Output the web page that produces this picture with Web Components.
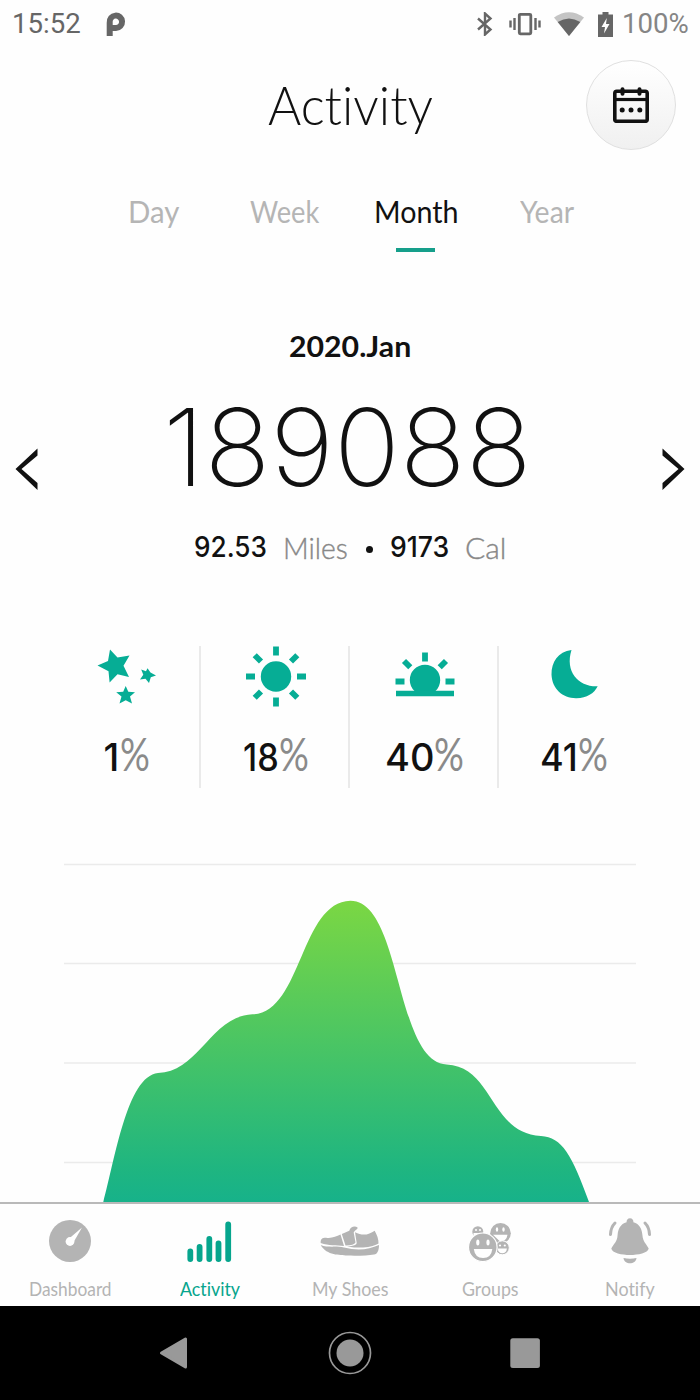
<!DOCTYPE html>
<html lang="en">
<head>
<meta charset="utf-8">
<meta name="viewport" content="width=device-width, initial-scale=1">
<title>Activity</title>
<style>
  body {
    margin: 0;
    background: #fefefe;
    font-family: Lato, "Open Sans", sans-serif;
    font-variant-ligatures: none;
    color: #111;
  }
</style>
</head>
<body>
<activity-app></activity-app>

<script>
const icons = {
  bluetooth: { box: '0 0 18 24', body: '<path d="M2 6.500L14.500 17.500L9 22.500V1.500L14.500 6.500L2 17.500" fill="none" stroke="currentColor" stroke-width="2.400"/>' },
  vibrate: { box: '0 0 32 24', body: '<rect x="10.300" y="2.300" width="11.500" height="19.500" rx="1" fill="none" stroke="currentColor" stroke-width="2.800"/><path d="M1.500 8.500v7M5.500 6v12M26.500 6v12M30.500 8.500v7" stroke="currentColor" stroke-width="2.400"/>' },
  wifi: { box: '0 0 30 24', body: '<path d="M0 5.500Q15-5 30 5.500L15 24Z" fill="#c4c4c4"/><path d="M3.700 10Q15 3 26.300 10L15 24Z" fill="currentColor"/>' },
  battery: { box: '0 0 15 25', body: '<path d="M4.500 0h6v2.500H15V25H0V2.500h4.500Z" fill="currentColor"/><path d="M8.800 6L3.500 15h3.500l-1 6.500L11.500 12H8Z" fill="#fff"/>' },
  calendar: { box: '0 0 36 36', body: '<rect x="1.800" y="4.300" width="32.400" height="30" rx="2" fill="none" stroke="currentColor" stroke-width="3.600"/><path d="M2 12.500h32" stroke="currentColor" stroke-width="3.200"/><path d="M9.500 2.200v4.500M26.500 2.200v4.500" stroke="currentColor" stroke-width="4" stroke-linecap="round"/><g fill="currentColor"><circle cx="9.200" cy="23" r="2.500"/><circle cx="18" cy="23" r="2.500"/><circle cx="26.800" cy="23" r="2.500"/></g>' },
  prev: { box: '0 0 24 42', body: '<path d="M22.500 .500V7.500L6.500 21L22.500 35V42L.500 21Z" fill="currentColor"/>' },
  next: { box: '0 0 24 42', body: '<path d="M1.500 .500V7.500L17.500 21L1.500 35V42L23.500 21Z" fill="currentColor"/>' },
  stars: { box: '0 0 62 62', body: '<g fill="currentColor"><path d="M14 4.500L21.500 12.500L33.500 10.500L27.500 20.800L33 32L21.500 29.300L13.600 37.500L12.500 26.200L1.500 20.500L12 16Z"/><path d="M51.500 23.200L54.500 27.500L60 30.500L54.800 32.200L53 38L49.500 33.700L44 34.500L47.300 29.800L45.200 24.500L50 26.200Z"/><path d="M29.700 41L32.300 46.800L39 47.300L34 51.500L36 58.500L29.700 55.200L23.500 58.500L25.500 51.500L20.200 47.300L27.200 46.800Z"/></g>' },
  sun: { box: '0 0 62 62', body: '<circle cx="31" cy="31.500" r="15.200" fill="currentColor"/><g stroke="currentColor" stroke-width="5.800"><path d="M31 1.500v9M31 52.500v9M1 31.500h9M52 31.500h9"/><path d="M9.700 10.200l6.300 6.300M46 46.500l6.300 6.300M52.300 10.200L46 16.500M16 46.500l-6.300 6.300"/></g>' },
  sunset: { box: '0 0 62 62', body: '<path d="M20.500 46A15.200 15.200 0 1 1 41.500 46Z" fill="currentColor"/><path d="M2 48.500h58" stroke="currentColor" stroke-width="5.500"/><path d="M31 7.500v9M1.500 36.500h9M51.500 36.500h9M10 16l6.300 6.300M52 16l-6.300 6.300" stroke="currentColor" stroke-width="5.800"/>' },
  moon: { box: '0 0 62 62', body: '<path d="M28.500 4.900C15 6.500 8.300 17 8.500 29.500C9 44 20 53.500 33.500 53.200C44 52.800 51 48.500 54.700 41.200C36 42 21.500 27 28.500 4.900Z" fill="currentColor"/>' },
  dashboard: { box: '0 0 60 48', body: '<circle cx="30" cy="24" r="21" fill="currentColor"/><circle cx="30" cy="24.500" r="4.400" fill="#fff"/><path d="M42 10.500L32.800 26.500L28 22.500Z" fill="#fff"/>' },
  activity: { box: '0 0 60 48', body: '<path d="M10.300 34.500v7.500M19.600 30v12M29.300 22v20M38.500 26.500v15.500M48.200 7.500v34.500" stroke="currentColor" stroke-width="5.800" stroke-linecap="round"/>' },
  shoes: { box: '0 0 60 48', body: `
    <g fill="currentColor">
      <path d="M.700 26C.500 22 2 20.700 6 20.700C12 21.500 16 19.500 20.500 17.500L24 29C16 28 9 29 .700 26Z"/>
      <path d="M21.800 17L29.300 13.700C30.500 9.500 35 8.700 37.500 10.500C38.500 12 34.500 13 33.700 15.500L35.500 25.500Q34 28.500 25.500 28.500Z"/>
      <path d="M35 15.200C43 19.500 49 17.500 54.700 13.700C57 18 58.700 22 58.500 26.500C51 30.500 43 31.500 27 29.700Q37 28.500 36.700 26Z"/>
      <path d="M.700 28C8 31 16 28.500 24 30.500C38 34 49 32.500 59 28C59 33 57.500 37.300 54 37.500C48 38.500 38 39 27 38.600C20 37.500 7 39 .700 28Z"/>
    </g>` },
  groups: { box: '0 0 60 48', body: `
    <circle cx="17.800" cy="14.700" r="5.500" fill="currentColor"/><circle cx="16" cy="13" r="1" fill="#fff"/><circle cx="20" cy="13" r="1" fill="#fff"/><path d="M13.500 16h8.500v4h-8.500Z" fill="#fff"/>
    <circle cx="40.500" cy="16.300" r="10.300" fill="currentColor"/><ellipse cx="37" cy="12.500" rx="1.200" ry="2.200" fill="#fff"/><ellipse cx="43.500" cy="12.500" rx="1.200" ry="2.200" fill="#fff"/><path d="M33 17.800H47.500Q46.500 24.500 40 24.500Z" fill="#fff"/>
    <circle cx="42.300" cy="30.800" r="7" fill="currentColor" stroke="#fff"/><circle cx="40" cy="28.500" r="1.100" fill="#fff"/><circle cx="44.800" cy="28.500" r="1.100" fill="#fff"/><path d="M37.700 31.500h9.200q-.500 4.700-4.600 4.700t-4.600-4.700Z" fill="#fff"/>
    <circle cx="22.800" cy="30.300" r="14.300" fill="currentColor" stroke="#fff" stroke-width="1.200"/><ellipse cx="17.800" cy="25.500" rx="1.600" ry="3" fill="#fff"/><ellipse cx="28" cy="25.500" rx="1.600" ry="3" fill="#fff"/><path d="M13.800 32h18.500q-1 9-9.200 9T13.800 32Z" fill="#fff"/>` },
  notify: { box: '0 0 60 48', body: '<path d="M30 1.200C27.800 1.200 26.300 3 26.600 5.300C20.500 7 18 12 17.600 18C17.200 25 13.500 27 11.300 31.500C12 36 22 38 30 38S48 36 48.700 31.500C46.500 27 43 25 42.400 18C42 12 39.500 7 33.400 5.300C33.700 3 32.200 1.200 30 1.200ZM23.500 41C28 42 32 42 36.500 41C36 48 24 48 23.500 41Z" fill="currentColor"/><path d="M15 6C12 9 10.700 12.500 10.500 17.500M45 6C48 9 49.300 12.500 49.500 17.500" stroke="currentColor" stroke-width="3" stroke-linecap="round" fill="none"/>' },
  back: { box: '0 0 44 44', body: '<path d="M8.500 22L32.500 8V36Z" fill="currentColor" stroke="currentColor" stroke-width="3" stroke-linejoin="round"/>' },
  home: { box: '0 0 44 44', body: '<circle cx="22" cy="22" r="13.500" fill="currentColor"/><circle cx="22" cy="22" r="20.500" fill="none" stroke="currentColor" stroke-width="1.700"/>' },
  recent: { box: '0 0 44 44', body: '<rect x="7.300" y="7.300" width="29.600" height="29.600" rx="2.500" fill="currentColor"/>' }
};

class AppIcon extends HTMLElement {
  constructor() {
    super();
    this.attachShadow({ mode: 'open' });
  }

  connectedCallback() {
    const icon = icons[this.getAttribute('name')];
    const [, , w, h] = icon.box.split(' ');
    this.shadowRoot.innerHTML = `
      <style>
        :host { display: block; width: ${w}px; height: ${h}px; flex: none; }
        svg { display: block; }
      </style>
      <svg width="${w}" height="${h}" viewBox="${icon.box}">${icon.body}</svg>
    `;
  }
}

// One line of text squeezed or stretched to a given width
class FitText extends HTMLElement {
  constructor() {
    super();
    this.attachShadow({ mode: 'open' });
  }

  connectedCallback() {
    const width = Number(this.getAttribute('width'));
    this.shadowRoot.innerHTML = `
      <style>
        :host { display: block; width: ${width}px; white-space: nowrap; flex: none; }
        span { display: inline-block; transform-origin: 0 50%; }
      </style>
      <span><slot></slot></span>
    `;
    const span = this.shadowRoot.querySelector('span');
    span.style.transform = `scaleX(${width / span.offsetWidth})`;
  }
}

class StatusBar extends HTMLElement {
  constructor() {
    super();
    this.attachShadow({ mode: 'open' });
    this.shadowRoot.innerHTML = `
      <style>
        :host {
          display: flex;
          align-items: center;
          height: 48px;
          padding: 0 11px 0 12px;
          box-sizing: border-box;
          font: 28px/48px Roboto, sans-serif;
          color: #666;
        }
        .app { margin-left: 25px; }
        .right { margin-left: auto; display: flex; align-items: center; }
        .pct { color: #858585; margin-left: 9px; }
      </style>
      <fit-text width="69">15:52</fit-text>
      <svg class="app" width="20" height="24" viewBox="0 0 20 24">
        <path d="M3.700 24V10.500A6.200 6.200 0 1 1 10 16H4" fill="none" stroke="currentColor" stroke-width="6"/>
      </svg>
      <div class="right">
        <app-icon name="bluetooth"></app-icon>
        <app-icon name="vibrate" style="margin-left:15px"></app-icon>
        <app-icon name="wifi" style="margin-left:13px"></app-icon>
        <app-icon name="battery" style="margin-left:14px"></app-icon>
        <fit-text class="pct" width="67">100%</fit-text>
      </div>
    `;
  }
}

class ActivityHeader extends HTMLElement {
  constructor() {
    super();
    this.attachShadow({ mode: 'open' });
    this.shadowRoot.innerHTML = `
      <style>
        :host {
          display: grid;
          grid-template-columns: 1fr auto 1fr;
          align-items: center;
          height: 112px;
          padding: 0 24px;
        }
        .title { grid-column: 2; font-size: 53px; font-weight: 300; line-height: 110px; padding-top: 2px; }
        .button {
          justify-self: end;
          display: flex;
          align-items: center;
          justify-content: center;
          width: 90px;
          height: 90px;
          margin-top: 1px;
          box-sizing: border-box;
          border: 1.5px solid #e0e0e0;
          border-radius: 50%;
          background: linear-gradient(#fff, #f0f0f0);
        }
      </style>
      <fit-text class="title" width="165"><slot></slot></fit-text>
      <div class="button"><app-icon name="calendar"></app-icon></div>
    `;
  }
}

class PeriodTab extends HTMLElement {
  constructor() {
    super();
    this.attachShadow({ mode: 'open' });
  }

  connectedCallback() {
    this.shadowRoot.innerHTML = `
      <style>
        :host {
          display: flex;
          flex-direction: column;
          align-items: center;
          width: 131px;
          color: #b5b5b5;
          font-size: 30px;
          line-height: 40px;
        }
        :host([active]) { color: #111; }
        i { width: 39px; height: 4px; margin-top: 17px; }
        :host([active]) i { background: #169f8b; }
      </style>
      <fit-text width="${this.getAttribute('text-width')}"><slot></slot></fit-text>
      <i></i>
    `;
  }
}

class MonthSummary extends HTMLElement {
  constructor() {
    super();
    this.attachShadow({ mode: 'open' });
    this.shadowRoot.innerHTML = `
      <style>
        :host {
          display: flex;
          justify-content: space-between;
          height: 251px;
          padding: 0 15px;
        }
        .arrow { margin-top: 122px; }
        .middle { display: flex; flex-direction: column; align-items: center; }
        .date { font-size: 29px; font-weight: 700; line-height: 40px; }
        .steps {
          font: 200 107px/130px Inter, sans-serif;
          margin: 16px 5px 0 0;
        }
        .totals {
          display: flex;
          align-items: center;
          margin-top: 14px;
          font-size: 30px;
          line-height: 40px;
        }
        .num { font: 500 28px/40px Inter, sans-serif; padding-top: 1px; }
        .unit { color: #888; font-weight: 300; margin-left: 16px; -webkit-text-stroke: .4px #888; }
        .dot { width: 7px; height: 7px; border-radius: 50%; background: #111; margin: 5px 17px 0 18px; }
      </style>
      <app-icon class="arrow" name="prev"></app-icon>
      <div class="middle">
        <fit-text class="date" width="122">2020.Jan</fit-text>
        <fit-text class="steps" width="369">189088</fit-text>
        <div class="totals">
          <fit-text class="num" width="73">92.53</fit-text>
          <fit-text class="unit" width="65">Miles</fit-text>
          <span class="dot"></span>
          <fit-text class="num" width="59">9173</fit-text>
          <fit-text class="unit" width="41">Cal</fit-text>
        </div>
      </div>
      <app-icon class="arrow" name="next"></app-icon>
    `;
  }
}

class DayPart extends HTMLElement {
  constructor() {
    super();
    this.attachShadow({ mode: 'open' });
  }

  connectedCallback() {
    this.shadowRoot.innerHTML = `
      <style>
        :host {
          display: flex;
          flex-direction: column;
          align-items: center;
          width: 149px;
          height: 142px;
          box-sizing: border-box;
          padding-left: 2px;
          border-right: 2px solid #eaeaea;
        }
        :host(:last-of-type) { border-color: transparent; }
        app-icon { color: #06ad95; margin-top: -1px; }
        .value { display: flex; margin-top: 26px; font: 500 38px/48px Inter, sans-serif; }
        .sign { font: 400 46px/42px Lato, sans-serif; color: #8a8a8a; }
      </style>
      <app-icon name="${this.getAttribute('icon')}"></app-icon>
      <div class="value">
        <fit-text width="${this.getAttribute('text-width')}"><slot></slot></fit-text>
        <fit-text class="sign" width="30">%</fit-text>
      </div>
    `;
  }
}

class StepChart extends HTMLElement {
  constructor() {
    super();
    this.attachShadow({ mode: 'open' });
    this.shadowRoot.innerHTML = `
      <style>
        :host { display: block; height: 352px; }
        svg { display: block; }
      </style>
      <svg width="700" height="352" viewBox="0 850 700 352">
        <defs>
          <linearGradient id="fill" gradientUnits="userSpaceOnUse" x1="0" y1="900" x2="0" y2="1202">
            <stop offset="0" stop-color="#7bd743"/>
            <stop offset=".9" stop-color="#1eb581"/>
            <stop offset="1" stop-color="#17b28a"/>
          </linearGradient>
        </defs>
        <path d="M64 864.500H636M64 963.500H636M64 1063H636M64 1162.500H636" stroke="#ebebeb" stroke-width="1.600"/>
        <path fill="url(#fill)" d="M103.300 1202C115 1160 127 1076 158 1073C199 1072 211 1016 252.400 1014.300C302 1013 300 902 350.400 900.700C402 901 395 1062 446.600 1064.500C494 1067 490 1134 541 1136C562 1137 572 1155 589 1202Z"/>
      </svg>
    `;
  }
}

class NavItem extends HTMLElement {
  constructor() {
    super();
    this.attachShadow({ mode: 'open' });
  }

  connectedCallback() {
    this.shadowRoot.innerHTML = `
      <style>
        :host {
          display: flex;
          flex-direction: column;
          align-items: center;
          width: 140px;
          padding-top: 13px;
          color: #b4b4b4;
          font-size: 19px;
          line-height: 26px;
        }
        :host([active]) { color: #06a58d; }
        fit-text { margin-top: 11px; }
      </style>
      <app-icon name="${this.getAttribute('icon')}"></app-icon>
      <fit-text width="${this.getAttribute('text-width')}"><slot></slot></fit-text>
    `;
  }
}

class SystemBar extends HTMLElement {
  constructor() {
    super();
    this.attachShadow({ mode: 'open' });
    this.shadowRoot.innerHTML = `
      <style>
        :host {
          display: flex;
          justify-content: center;
          gap: 131px;
          height: 94px;
          padding-top: 25px;
          box-sizing: border-box;
          background: #000;
          color: #999;
        }
      </style>
      <app-icon name="back"></app-icon>
      <app-icon name="home"></app-icon>
      <app-icon name="recent"></app-icon>
    `;
  }
}

class ActivityApp extends HTMLElement {
  constructor() {
    super();
    this.attachShadow({ mode: 'open' });
    this.shadowRoot.innerHTML = `
      <style>
        :host { display: flex; flex-direction: column; width: 700px; height: 1400px; overflow: hidden; }
        .tabs { display: flex; justify-content: center; height: 133px; padding-top: 31px; box-sizing: border-box; }
        month-summary { margin-top: 33px; }
        .parts { display: flex; justify-content: center; margin-top: 69px; }
        step-chart { margin-top: 62px; }
        .nav {
          display: flex;
          height: 104px;
          box-sizing: border-box;
          border-top: 2px solid #b9b9b9;
          background: #fefefe;
        }
      </style>
      <status-bar></status-bar>
      <activity-header>Activity</activity-header>
      <div class="tabs">
        <period-tab text-width="51">Day</period-tab>
        <period-tab text-width="69">Week</period-tab>
        <period-tab text-width="84" active>Month</period-tab>
        <period-tab text-width="54">Year</period-tab>
      </div>
      <month-summary></month-summary>
      <div class="parts">
        <day-part icon="stars" text-width="16">1</day-part>
        <day-part icon="sun" text-width="36">18</day-part>
        <day-part icon="sunset" text-width="49">40</day-part>
        <day-part icon="moon" text-width="38">41</day-part>
      </div>
      <step-chart></step-chart>
      <div class="nav">
        <nav-item icon="dashboard" text-width="83">Dashboard</nav-item>
        <nav-item icon="activity" text-width="60" active>Activity</nav-item>
        <nav-item icon="shoes" text-width="76">My Shoes</nav-item>
        <nav-item icon="groups" text-width="57">Groups</nav-item>
        <nav-item icon="notify" text-width="50">Notify</nav-item>
      </div>
      <system-bar></system-bar>
    `;
  }
}

customElements.define('app-icon', AppIcon);
customElements.define('fit-text', FitText);
customElements.define('status-bar', StatusBar);
customElements.define('activity-header', ActivityHeader);
customElements.define('period-tab', PeriodTab);
customElements.define('month-summary', MonthSummary);
customElements.define('day-part', DayPart);
customElements.define('step-chart', StepChart);
customElements.define('nav-item', NavItem);
customElements.define('system-bar', SystemBar);
customElements.define('activity-app', ActivityApp);
</script>
</body>
</html>
